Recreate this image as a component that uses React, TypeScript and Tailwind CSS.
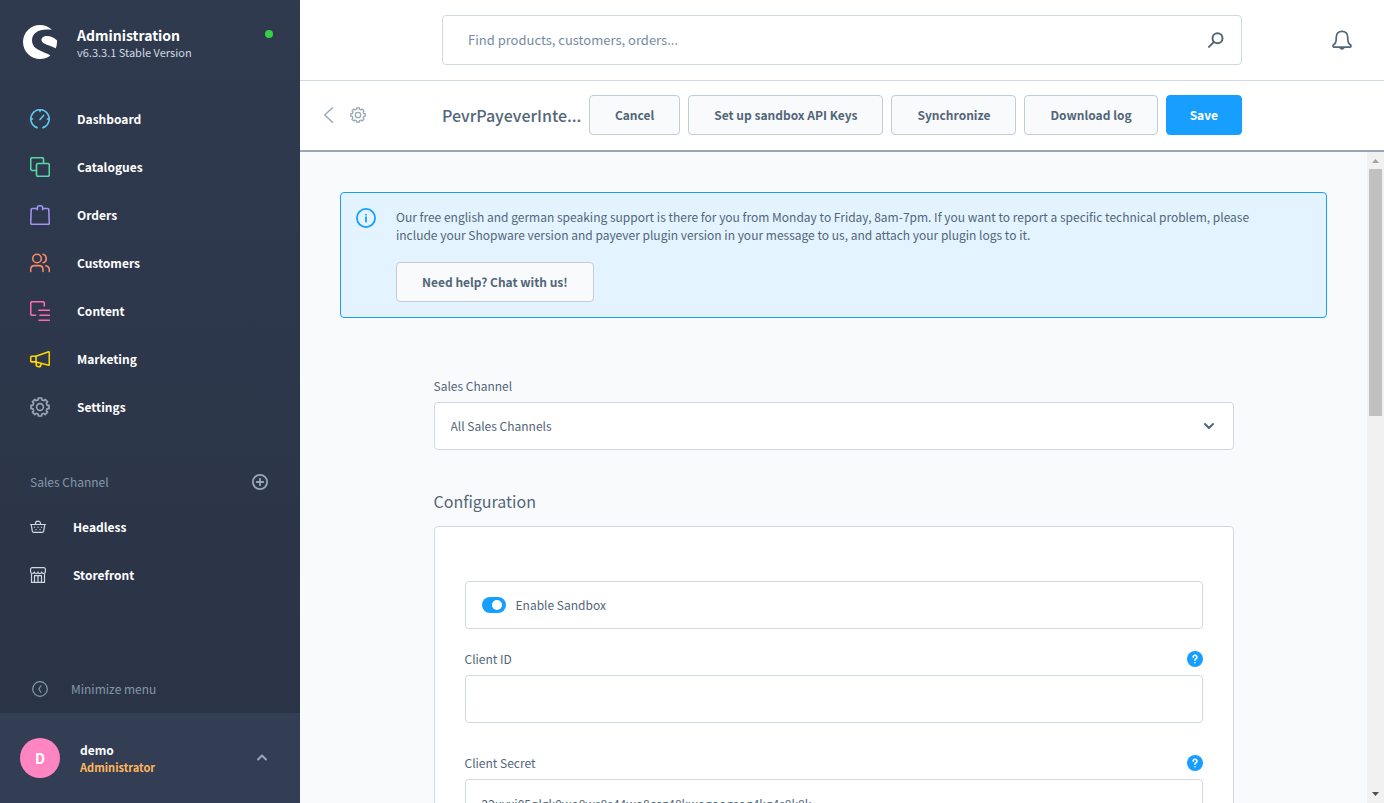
import { ReactNode, useState } from "react";
import { SiShopware } from "react-icons/si";

interface IconProps {
    children : ReactNode,
    size? : string,
    box? : number,
    className? : string,
    stroke? : number
}

function Icon({
    children,
    size = "size-5",
    box = 20,
    className = "",
    stroke = 1.6
} : IconProps) {
    return(
        <svg
            viewBox={`0 0 ${box} ${box}`}
            fill="none"
            stroke="currentColor"
            strokeWidth={stroke}
            strokeLinecap="round"
            strokeLinejoin="round"
            aria-hidden="true"
            className={`shrink-0 ${size} ${className}`}
        >
            {children}
        </svg>
    );
}

// outline of a cog with eight teeth, centred in a 20 x 20 box
const cogOutline = Array.from({ length : 8 }, (_, i) => {
    const point = (deg : number, r : number) => {
        const a = ((i * 45 + deg) * Math.PI) / 180;
        return `${(10 + r * Math.sin(a)).toFixed(2)} ${(10 - r * Math.cos(a)).toFixed(2)}`;
    };
    return `${i === 0 ? "M" : "L"}${point(-13, 7.4)}L${point(-11, 9.2)}L${point(11, 9.2)}L${point(13, 7.4)}`;
}).join("") + "Z";

function Cog() {
    return(
        <>
            <path d={cogOutline} />
            <circle cx="10" cy="10" r="3.4" />
        </>
    );
}

const menu = [
    {
        title : "Dashboard",
        color : "text-[#61c8ea]",
        icon : (
            <>
                <path d="M6.8 18.6A9.2 9.2 0 1 1 13.2 18.6" />
                <path d="M10 1v1.6M1 10h1.6M17.4 10H19M10 10.6l3.6-4.2M6.8 18.6l-1.2-.6M13.2 18.6l1.2-.6" />
            </>
        )
    },
    {
        title : "Catalogues",
        color : "text-[#57d9a3]",
        icon : (
            <>
                <rect x="6.5" y="6.5" width="12.8" height="12.8" rx="1.5" />
                <path d="M6.2 13.5H2.2A1.5 1.5 0 0 1 .7 12V2.2A1.5 1.5 0 0 1 2.2.7H12a1.5 1.5 0 0 1 1.5 1.5v4" />
            </>
        )
    },
    {
        title : "Orders",
        color : "text-[#a092f0]",
        icon : (
            <>
                <path d="M5 3.5H2.2A1 1 0 0 0 1.2 4.5L.7 18.2A1.1 1.1 0 0 0 1.8 19.3H18.2A1.1 1.1 0 0 0 19.3 18.2L18.8 4.5A1 1 0 0 0 17.8 3.5H15" />
                <path d="M5 3.5H7.4V3.2A2 2 0 0 1 9.2.8H10.8A2 2 0 0 1 12.6 3.2V3.5H15M7.4 3.5V4.8M12.6 3.5V4.8" />
            </>
        )
    },
    {
        title : "Customers",
        color : "text-[#f88962]",
        icon : (
            <>
                <circle cx="7" cy="5.5" r="4.3" />
                <path d="M.7 18.5V16A3.8 3.8 0 0 1 4.5 12.6H9.2A3.8 3.8 0 0 1 13 16V18.5" />
                <path d="M13.2 1.3A4.4 4.4 0 0 1 13.2 9.7M15.8 12.8A4 4 0 0 1 19.3 16.5V18.5" />
            </>
        )
    },
    {
        title : "Content",
        color : "text-[#ff68b4]",
        icon : (
            <>
                <path d="M5.5 14.3H2.2A1.5 1.5 0 0 1 .7 12.8V2.2A1.5 1.5 0 0 1 2.2.7H12.8A1.5 1.5 0 0 1 14.3 2.2V5" />
                <path d="M8.8 9.2H19.3M10 14.3H19.3M9 19.2H19.3" />
            </>
        )
    },
    {
        title : "Marketing",
        color : "text-[#ffd700]",
        icon : (
            <>
                <path d="M6 7.2L18.6 2.8A.6.6 0 0 1 19.3 3.3V15.8A.6.6 0 0 1 18.6 16.3L6 12.9Z" />
                <path d="M6 7.2H2A1.3 1.3 0 0 0 .7 8.5V11.6A1.3 1.3 0 0 0 2 12.9H6M6.2 13V15A2.2 2.2 0 0 0 11 15.6V14.5" />
            </>
        )
    },
    {
        title : "Settings",
        color : "text-[#98a7b7]",
        icon : <Cog />
    }
];

const channels = [
    {
        title : "Headless",
        icon : (
            <>
                <path d="M.6 5.5H15.4M1.2 5.5L2.3 12.2A1.5 1.5 0 0 0 3.8 13.4H12.2A1.5 1.5 0 0 0 13.7 12.2L14.8 5.5M5.5 5.3V4.6A2.5 2.5 0 0 1 10.5 4.6V5.3" />
                <path d="M4.5 8.2h.1M8 8.2h.1M11.5 8.2h.1M6 10.7h.1M10 10.7h.1" />
            </>
        )
    },
    {
        title : "Storefront",
        icon : (
            <>
                <path d="M2.2.6H13.8A1.6 1.6 0 0 1 15.4 2.2V4.5A1.8 1.8 0 0 1 11.7 4.8 1.85 1.85 0 0 1 8 4.8 1.85 1.85 0 0 1 4.3 4.8 1.8 1.8 0 0 1 .6 4.5V2.2A1.6 1.6 0 0 1 2.2.6Z" />
                <path d="M1.5 7V15.4H14.5V7M4.5 15V8.7H11.5V15M8 8.7V15" />
            </>
        )
    }
];

interface ButtonProps {
    children : ReactNode,
    primary? : boolean
}

function Button({
    children,
    primary = false
} : ButtonProps) {
    return(
        <button
            type="button"
            className={`h-10 shrink-0 rounded border text-xs font-bold whitespace-nowrap ${primary
                ? "border-[#189eff] bg-[#189eff] px-[23px] text-white"
                : "border-[#c2ccd6] bg-[#f9fafb] px-[25px] text-[#52667a]"}`}
        >
            {children}
        </button>
    );
}

interface TextFieldProps {
    id : string,
    label : string,
    value : string
}

function TextField({
    id,
    label,
    value
} : TextFieldProps) {

    const [text, setText] = useState(value);

    return(
        <div>
            <div className="mb-2 flex h-4 items-center justify-between">
                <label htmlFor={id}>{label}</label>
                <button type="button" aria-label={`Help for ${label}`} className="size-4 rounded-full bg-[#189eff] text-white">
                    <Icon size="size-4" box={16} stroke={1.6}>
                        <path d="M6.2 6.2A1.85 1.85 0 1 1 8.9 7.7C8.2 8.1 8 8.4 8 9.2M8 11.7V11.8" />
                    </Icon>
                </button>
            </div>
            <input
                id={id}
                type="text"
                value={text}
                onChange={(e)=>{
                    setText(e.target.value)
                }}
                className="h-12 w-full rounded border border-[#d1d9e0] bg-white px-4 outline-none"
            />
        </div>
    );
}

function Sidebar() {
    return(
        <aside className="flex w-[300px] shrink-0 flex-col bg-linear-to-b from-[#303a4f] to-[#2a3345] text-white">
            <div className="flex items-start px-[23px] pt-[25px]">
                <SiShopware className="size-[34px] shrink-0" />
                <div className="ml-5 flex-1">
                    <p className="text-sm/5 font-bold">Administration</p>
                    <p className="text-[11px]/[14px] text-[#d1d9e0]">v6.3.3.1 Stable Version</p>
                </div>
                <span className="mt-[5px] mr-1 size-2 rounded-full bg-[#37d046]"></span>
            </div>
            <nav className="mt-9">
                {menu.map((item)=>(
                    <a key={item.title} href="#" className="flex h-12 items-center gap-[27px] px-[30px] font-bold">
                        <Icon className={item.color}>{item.icon}</Icon>
                        {item.title}
                    </a>
                ))}
            </nav>
            <div className="mt-[43px] flex h-4 items-center justify-between pr-8 pl-[30px] text-[#8498ac]">
                <h2>Sales Channel</h2>
                <button type="button" aria-label="Add sales channel" className="text-[#98a7b7]">
                    <Icon size="size-4" box={16} stroke={1.8}>
                        <circle cx="8" cy="8" r="7.1" />
                        <path d="M8 4.7V11.3M4.7 8H11.3" />
                    </Icon>
                </button>
            </div>
            <nav className="mt-[13px]">
                {channels.map((item)=>(
                    <a key={item.title} href="#" className="flex h-12 items-center gap-[27px] px-[30px] font-bold">
                        <Icon size="size-4" box={16} stroke={1.2} className="text-[#d1d9e0]">{item.icon}</Icon>
                        {item.title}
                    </a>
                ))}
            </nav>
            <button type="button" className="mt-auto flex h-12 items-center gap-[23px] px-8 text-[#8498ac]">
                <Icon size="size-4" box={16} stroke={1.2}>
                    <circle cx="8" cy="8" r="7.3" />
                    <path d="M8.8 4.8L6.9 8L8.8 11.2" />
                </Icon>
                Minimize menu
            </button>
            <button type="button" className="flex h-[90px] shrink-0 items-center bg-[#333d54] pr-8 pl-5 text-left">
                <span className="flex size-10 items-center justify-center rounded-full bg-[#ff85c2] text-sm font-bold">D</span>
                <span className="ml-5 flex-1 font-bold">
                    <span className="block leading-[18px]">demo</span>
                    <span className="block text-[11px]/4 text-[#ffb75d]">Administrator</span>
                </span>
                <Icon size="size-3" box={12} stroke={2} className="text-[#98a7b7]">
                    <path d="M2 7.5L6 3.5L10 7.5" />
                </Icon>
            </button>
        </aside>
    );
}

export default function App() {

    const [sandbox, setSandbox] = useState(true);

    return(
        <div className="flex h-screen overflow-hidden bg-white font-['Noto_Sans_CJK_SC',sans-serif] text-xs text-[#52667a]">
            <Sidebar />
            <div className="flex min-w-0 flex-1 flex-col">
                <header className="grid shrink-0 grid-cols-[1fr_minmax(0,800px)_1fr] items-center border-b border-[#d1d9e0] py-[15px]">
                    <label className="col-start-2 flex h-[50px] items-center rounded border border-[#d1d9e0] pr-[17px] pl-[25px]">
                        <input
                            type="search"
                            aria-label="Search"
                            placeholder="Find products, customers, orders..."
                            className="flex-1 text-[13px] outline-none placeholder:text-[#758ca3]"
                        />
                        <Icon size="size-4" box={16} stroke={2}>
                            <circle cx="9.5" cy="6.3" r="5" />
                            <path d="M5.7 10.1L1 14.9" />
                        </Icon>
                    </label>
                    <button type="button" aria-label="Notifications" className="mr-8 justify-self-end">
                        <Icon stroke={1.7}>
                            <path d="M10 1.300C6.500 1.300 4.300 3.700 4.300 7C4.300 12 3.800 13 1.300 15.200A1.200 1.200 0 0 0 1.900 17.200H18.100A1.200 1.200 0 0 0 18.700 15.200C16.200 13 15.700 12 15.700 7C15.700 3.700 13.500 1.300 10 1.300ZM8 17.600A2.200 2.200 0 0 0 12 17.600" />
                        </Icon>
                    </button>
                </header>
                <div className="grid shrink-0 grid-cols-[1fr_minmax(0,800px)_1fr] items-center border-b-2 border-[#98a7b7] pt-[14px] pb-[15px]">
                    <div className="flex items-center gap-3 pl-[22px] text-[#98a7b7]">
                        <a href="#" aria-label="Back">
                            <Icon size="size-4" box={16} stroke={1.4}>
                                <path d="M10.5.7L2.7 8L10.5 15.3" />
                            </Icon>
                        </a>
                        <a href="#" aria-label="Plugin settings">
                            <Icon size="size-4"><Cog /></Icon>
                        </a>
                    </div>
                    <div className="flex items-center gap-2">
                        <h1 className="min-w-0 flex-1 text-base font-medium whitespace-nowrap">PevrPayeverInte...</h1>
                        <Button>Cancel</Button>
                        <Button>Set up sandbox API Keys</Button>
                        <Button>Synchronize</Button>
                        <Button>Download log</Button>
                        <Button primary>Save</Button>
                    </div>
                </div>
                <div className="flex min-h-0 flex-1 bg-[#f9fafc]">
                    <main className="min-w-0 flex-1 overflow-hidden px-10 pt-10">
                        <section className="flex items-start gap-5 rounded border border-[#189eff] bg-[#e3f3ff] p-[15px] pr-10">
                            <Icon stroke={1.8} className="text-[#189eff]">
                                <circle cx="10" cy="10" r="9.1" />
                                <path d="M10 9.2V13.6M10 6.6V6.7" />
                            </Icon>
                            <div>
                                <p className="mb-[18px] leading-[18px]">
                                    Our free english and german speaking support is there for you from Monday to Friday, 8am-7pm. If you want to report a specific technical problem, please include your Shopware version and payever plugin version in your message to us, and attach your plugin logs to it.
                                </p>
                                <Button>Need help? Chat with us!</Button>
                            </div>
                        </section>
                        <div className="mx-auto mt-[60px] max-w-[800px]">
                            <label htmlFor="channel" className="mb-2 block leading-4">Sales Channel</label>
                            <div className="relative">
                                <select id="channel" className="h-12 w-full appearance-none rounded border border-[#d1d9e0] bg-white px-4 outline-none">
                                    <option>All Sales Channels</option>
                                </select>
                                <Icon size="size-3" box={12} stroke={2} className="pointer-events-none absolute top-[18px] right-[19px]">
                                    <path d="M2 4L6 8L10 4" />
                                </Icon>
                            </div>
                            <h2 className="mt-10 text-base/[22px]">Configuration</h2>
                            <div className="mt-3.5 flex flex-col rounded border border-[#d1d9e0] bg-white px-[30px] pt-[54px] pb-8">
                                <label className="flex h-12 items-center gap-2.5 rounded border border-[#d1d9e0] px-4">
                                    <input
                                        type="checkbox"
                                        checked={sandbox}
                                        onChange={()=>{
                                            setSandbox(!sandbox)
                                        }}
                                        className="flex h-4 w-6 appearance-none items-center rounded-full bg-[#bcc8d3] px-1 before:size-2.5 before:rounded-full before:bg-white checked:justify-end checked:bg-[#189eff]"
                                    />
                                    Enable Sandbox
                                </label>
                                <div className="mt-[22px] flex flex-col gap-8">
                                    <TextField id="client-id" label="Client ID" value="" />
                                    <TextField id="client-secret" label="Client Secret" value="22uvxi05qlgk0wo8ws8s44wo8ccg48kwogoogsog4kg4s8k8k" />
                                </div>
                            </div>
                        </div>
                    </main>
                    <div aria-hidden="true" className="flex w-[17px] shrink-0 flex-col items-center bg-[#f1f1f1]">
                        <svg viewBox="0 0 17 17" className="size-[17px] shrink-0 fill-[#a3a3a3]"><path d="M5 11L8.5 7L12 11Z" /></svg>
                        <div className="h-[38%] w-[13px] bg-[#c1c1c1]"></div>
                        <svg viewBox="0 0 17 17" className="mt-auto size-[17px] shrink-0 fill-[#505050]"><path d="M5 6L8.5 10L12 6Z" /></svg>
                    </div>
                </div>
            </div>
        </div>
    );
}
